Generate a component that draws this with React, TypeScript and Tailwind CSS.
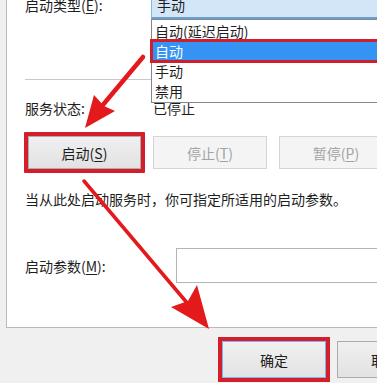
import React from "react";

const font = { fontFamily: '"Microsoft YaHei", "Noto Sans CJK SC", "Noto Sans", sans-serif' };

function WinButton({ label, hot, disabled, focus, className = "" }: { label: string; hot: string; disabled?: boolean; focus?: boolean; className?: string }) {
  const base = disabled
    ? "border-[#d5d5d5] bg-[#f4f4f4] text-[#a3a3a3]"
    : focus
    ? "border-[#7eb4ea] bg-gradient-to-b from-[#f0f0f0] to-[#e3e3e3] text-[#1c1c1c]"
    : "border-[#acacac] bg-gradient-to-b from-[#f0f0f0] to-[#e2e2e2] text-[#1c1c1c]";
  return (
    <div className={`flex shrink-0 items-center justify-center border ${base} ${className}`}>
      {label}
      {hot && (
        <span>
          (<span className="underline underline-offset-2">{hot}</span>)
        </span>
      )}
    </div>
  );
}

function Arrows() {
  return (
    <svg className="absolute left-0 top-0 pointer-events-none" width="377" height="383" viewBox="0 0 377 383">
      {/* arrow to 启动 button */}
      <line x1="143" y1="57" x2="102" y2="106" stroke="#e3191c" strokeWidth="4.5" strokeLinecap="round" />
      <polygon points="85,128 94,95 104,106 115,111" fill="#e3191c" />
      {/* arrow to 确定 button */}
      <line x1="84" y1="181" x2="188" y2="304" stroke="#e3191c" strokeWidth="3.5" strokeLinecap="round" />
      <polygon points="209,329 171,307 188,301 197,285" fill="#e3191c" />
    </svg>
  );
}

export default function App() {
  return (
    <div className="relative w-[377px] h-[383px] overflow-hidden bg-[#f0f0f0] text-[14px] text-[#1e1e1e] leading-[20px]" style={font}>
      {/* white tab page */}
      <div className="ml-[6px] h-[328px] border-l border-b border-[#b9b9b9] bg-white pl-[18px]">
        <div className="flex h-[19px]">
          <div className="w-[126px] -mt-[5px]">
            启动类型(<span className="underline underline-offset-2">E</span>):
          </div>
          <div className="flex-1 -mt-[6px] h-[25px] border-l border-b-2 border-l-[#8fb5dc] border-b-[#6a9fd2] bg-[#d3e6f8] pl-[5px] leading-[22px]">
            手动
          </div>
        </div>

        <div className="mt-[60px] h-px bg-[#c8c8c8]" />

        <div className="flex mt-[18px] h-[20px]">
          <div className="w-[128px]">服务状态:</div>
          <div>已停止</div>
        </div>

        <div className="flex items-center mt-[14px] -ml-[1px]">
          <div className="shrink-0 border-4 border-[#d1202b] rounded-[1px]">
            <WinButton label="启动" hot="S" className="w-[113px] h-[33px]" />
          </div>
          <WinButton label="停止" hot="T" disabled className="ml-[8px] w-[114px] h-[33px]" />
          <WinButton label="暂停" hot="P" disabled className="ml-[12px] w-[114px] h-[33px]" />
        </div>

        <div className="mt-[16px] whitespace-nowrap">当从此处启动服务时，你可指定所适用的启动参数。</div>

        <div className="flex items-center mt-[39px]">
          <div className="w-[151px] shrink-0">
            启动参数(<span className="underline underline-offset-2">M</span>):
          </div>
          <div className="flex-1 h-[35px] border border-r-0 border-[#b4b4b4] bg-white" />
        </div>
      </div>

      {/* bottom buttons */}
      <div className="flex items-start mt-[9px] pl-[218px]">
        <div className="border-4 border-[#d1202b] shrink-0">
          <WinButton label="确定" hot="" focus className="w-[104px] h-[37px]" />
        </div>
        <WinButton label="取消" hot="" className="ml-[7px] mt-[4px] w-[96px] h-[37px]" />
      </div>

      {/* open dropdown list */}
      <div className="absolute left-[151px] top-[19px] w-[240px] h-[84px] border border-[#828790] bg-white pt-[1px]">
        <div className="h-[20px] pl-[3px]">自动(延迟启动)</div>
        <div className="relative h-[20px] bg-[#3594f3] text-white pl-[3px]">
          自动
          <div className="absolute -left-[2px] -right-[2px] -top-[2px] -bottom-[2px] border-[3px] border-[#cf1f2c]" />
        </div>
        <div className="h-[20px] pl-[3px]">手动</div>
        <div className="h-[20px] pl-[3px]">禁用</div>
      </div>

      <Arrows />
    </div>
  );
}
